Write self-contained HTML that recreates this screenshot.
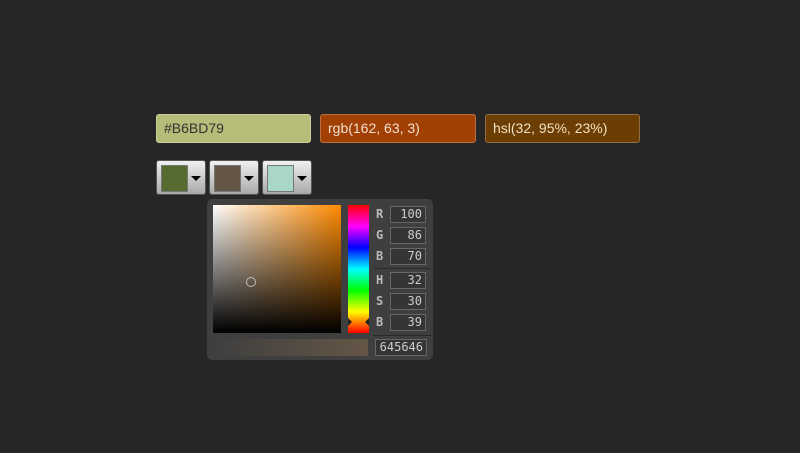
<!DOCTYPE html><html><head><style>
body{margin:0;width:800px;height:453px;background:#262626;font-family:"Liberation Sans",sans-serif;position:relative;overflow:hidden}
.in{position:absolute;top:114px;height:29px;box-sizing:border-box;border-radius:3px;font-size:14px;line-height:27px;padding-left:7px;border:1px solid rgba(255,255,255,.25)}
.sw{position:absolute;top:160px;width:50px;height:35px;box-sizing:border-box;border-radius:3px;background:linear-gradient(#f0f0f0,#a8a8a8);border:1px solid #555}
.sw i{position:absolute;left:4px;top:4px;width:25px;height:25px;border:1px solid #777}
.sw b{position:absolute;left:34px;top:15px;border-left:5px solid transparent;border-right:5px solid transparent;border-top:5px solid #000}
.p{position:absolute;left:207px;top:199px;width:226px;height:161px;background:#3f3f3f;border-radius:5px}
.l{position:absolute;left:169px;color:#bbb;font:bold 12px "DejaVu Sans Mono",monospace}
.f{position:absolute;left:183px;width:36px;height:17px;box-sizing:border-box;border:1px solid #666;background:#353535;color:#ccc;font:12px "DejaVu Sans Mono",monospace;text-align:right;padding-right:3px;line-height:15px}
</style></head><body>
<div class="in" style="left:156px;width:155px;background:#b6bd79;color:#333">#B6BD79</div>
<div class="in" style="left:320px;width:156px;background:#a23f03;color:#f0e0d0">rgb(162, 63, 3)</div>
<div class="in" style="left:485px;width:155px;background:#6d3e04;color:#f0e0c0">hsl(32, 95%, 23%)</div>
<div class="sw" style="left:156px"><i style="background:#566b30"></i><b></b></div>
<div class="sw" style="left:209px"><i style="background:#645646"></i><b></b></div>
<div class="sw" style="left:262px"><i style="background:#a8d6c8"></i><b></b></div>
<div class="p">
<div style="position:absolute;left:6px;top:6px;width:128px;height:128px;background:linear-gradient(transparent,#000),linear-gradient(90deg,#fff,#ff8a00)"></div>
<div style="position:absolute;left:39px;top:78px;width:8px;height:8px;border:1px solid #bbb;border-radius:50%"></div>
<div style="position:absolute;left:141px;top:6px;width:21px;height:128px;background:linear-gradient(red,#f0f,#00f,#0ff,#0f0,#ff0,red)"></div>
<div style="position:absolute;left:141px;top:119px;border-top:4px solid transparent;border-bottom:4px solid transparent;border-left:4px solid #222"></div>
<div style="position:absolute;left:158px;top:119px;border-top:4px solid transparent;border-bottom:4px solid transparent;border-right:4px solid #222"></div>
<div style="position:absolute;left:6px;top:140px;width:155px;height:17px;background:linear-gradient(90deg,#3f3f3f,#645646)"></div>
<div style="position:absolute;left:166px;top:69px;width:58px;height:1px;background:#2a2a2a"></div>
<div style="position:absolute;left:166px;top:136px;width:58px;height:1px;background:#2a2a2a"></div>
<div class="l" style="top:8px">R</div><div class="f" style="top:7px">100</div>
<div class="l" style="top:29px">G</div><div class="f" style="top:28px">86</div>
<div class="l" style="top:50px">B</div><div class="f" style="top:49px">70</div>
<div class="l" style="top:74px">H</div><div class="f" style="top:73px">32</div>
<div class="l" style="top:95px">S</div><div class="f" style="top:94px">30</div>
<div class="l" style="top:116px">B</div><div class="f" style="top:115px">39</div>
<div class="f" style="left:168px;width:52px;top:140px">645646</div>
</div>
</body></html>
